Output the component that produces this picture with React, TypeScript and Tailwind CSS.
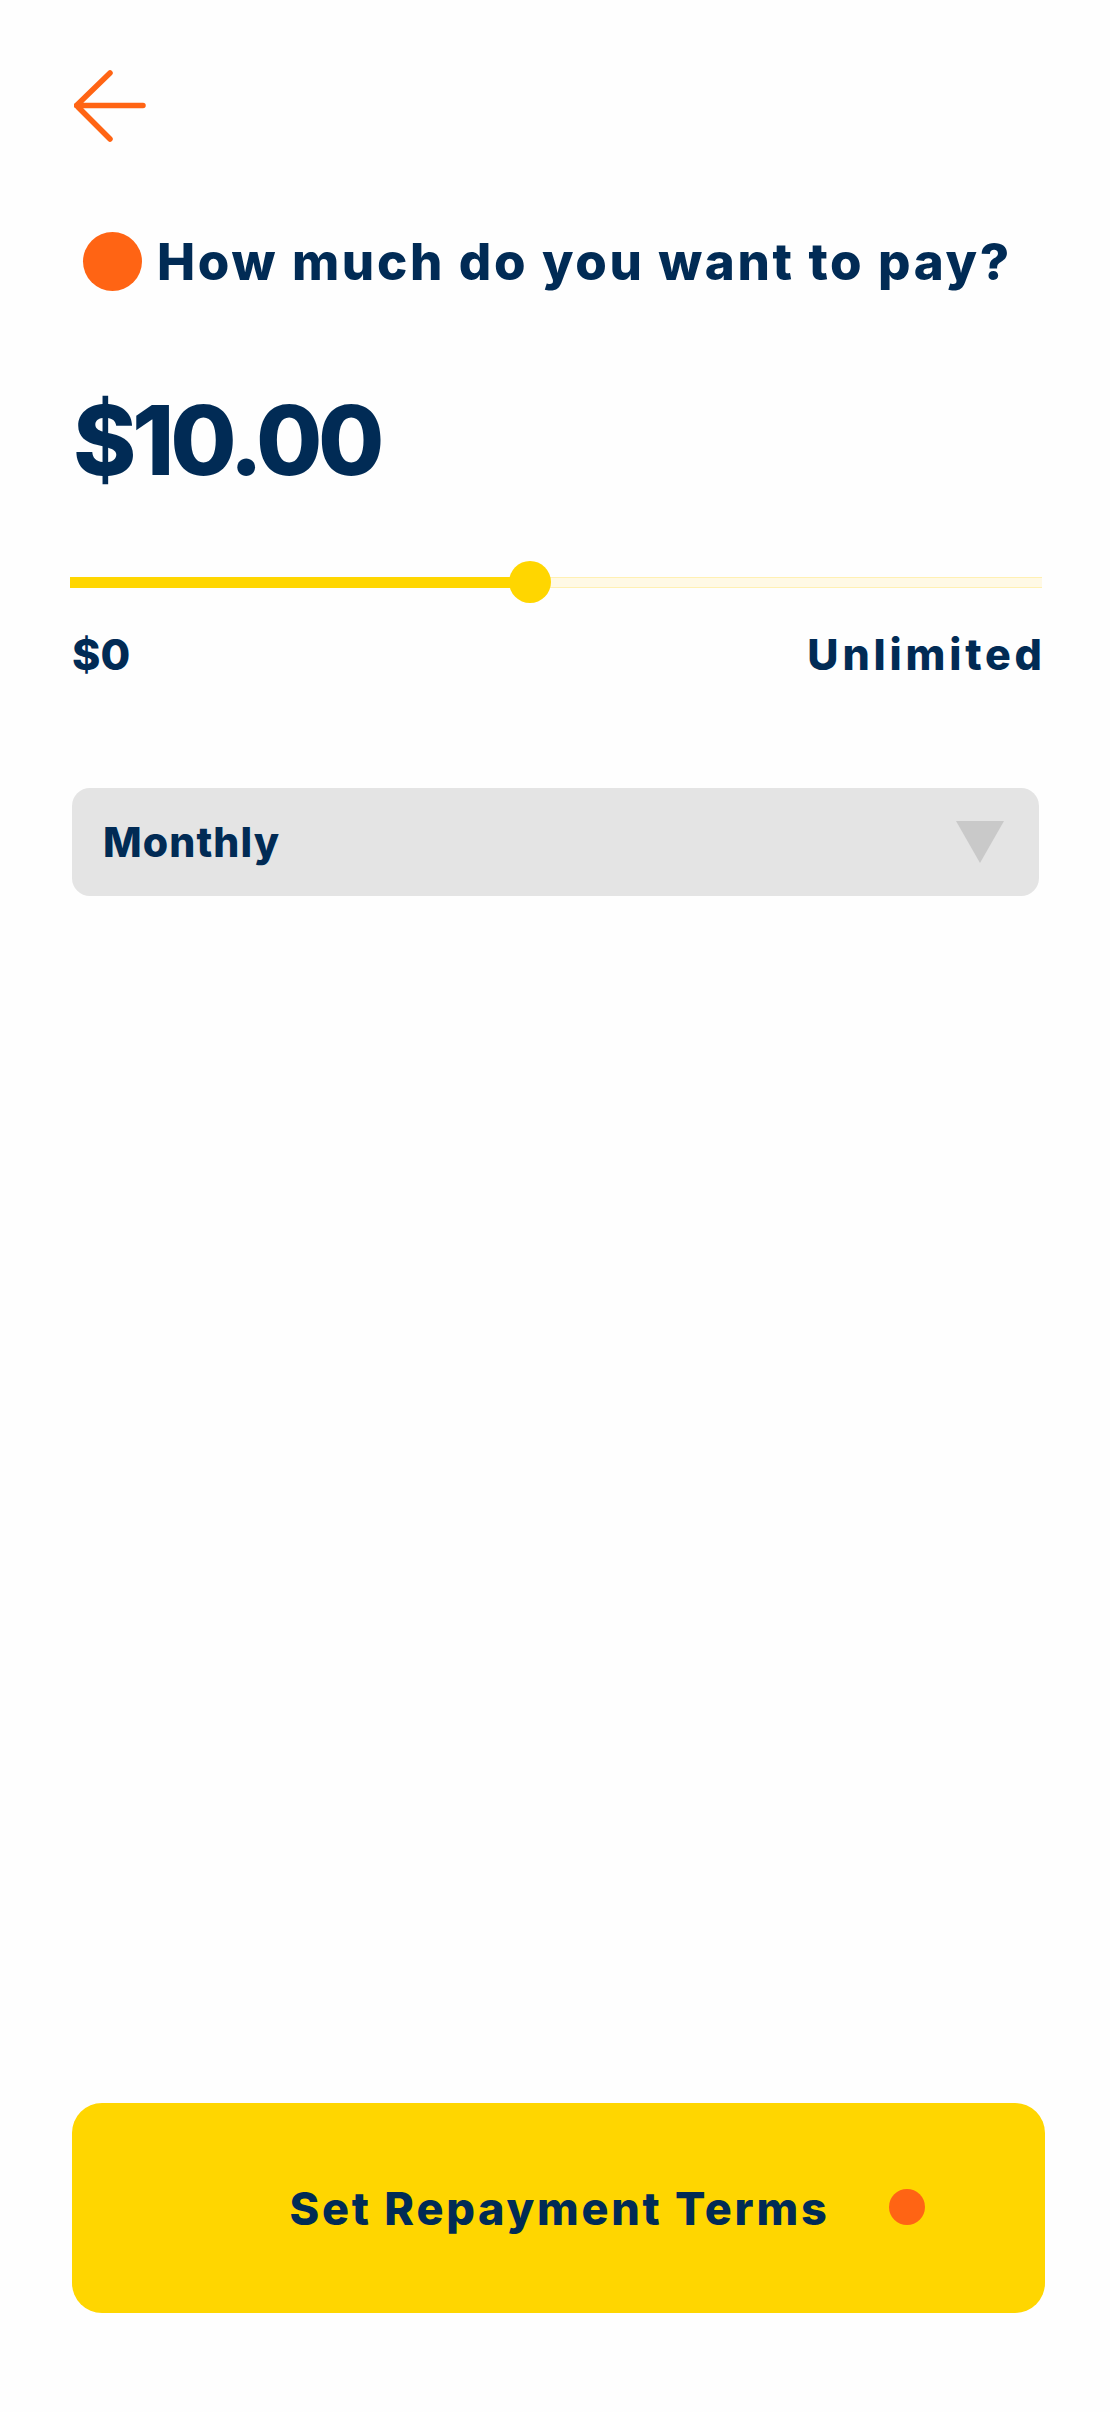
import React from "react";

const font = { fontFamily: "Inter, 'Noto Sans', sans-serif" };

export default function App() {
  const pct = 47.3;
  return (
    <div
      className="flex min-h-[2412px] w-full flex-col bg-[#fefefe] pb-[99px] text-[#012b55]"
      style={font}
    >
      <div className="ml-[74px] mt-[70px] h-[72px] w-[72px]">
        <svg width="72" height="72" viewBox="0 0 72 72" fill="none">
          <path
            d="M36 3 L2.5 35.5 L36 69 M2.5 35.5 H69"
            stroke="#ff6414"
            strokeWidth="5.5"
            strokeLinecap="round"
            strokeLinejoin="round"
          />
        </svg>
      </div>

      <div className="ml-[83px] mt-[90px] flex h-[59px] items-center gap-[15px]">
        <div className="h-[59px] w-[59px] shrink-0 rounded-full bg-[#ff6414]" />
        <h1 className="whitespace-nowrap text-[51px] font-extrabold leading-none tracking-[2.65px]">
          How much do you want to pay?
        </h1>
      </div>

      <div className="ml-[73px] mt-[101px] text-[96px] font-extrabold leading-none tracking-[-4.3px]">
        $10.00
      </div>

      <div className="relative ml-[70px] mt-[73px] flex h-[42px] w-[972px] items-center">
        <div className="h-[11px] w-full border-y border-[#fff0b3] bg-[#fff9e5]" />
        <div
          className="absolute left-0 top-[15.5px] h-[11px] bg-[#ffd600]"
          style={{ width: `${pct}%` }}
        />
        <div
          className="absolute top-0 h-[42px] w-[42px] -translate-x-1/2 rounded-full bg-[#ffd600]"
          style={{ left: `${pct}%` }}
        />
      </div>

      <div className="ml-[72px] mt-[30px] flex w-[970px] items-start justify-between text-[43px] font-extrabold leading-none">
        <span className="tracking-[0px]">$0</span>
        <span className="-mr-[3.8px] tracking-[3.8px]">Unlimited</span>
      </div>

      <div className="ml-[72px] mt-[112px] flex h-[108px] w-[967px] items-center justify-between rounded-[18px] bg-[#e4e4e4] pl-[31px] pr-[35px]">
        <span className="text-[41px] font-extrabold leading-none tracking-[1.1px]">Monthly</span>
        <svg width="48" height="42" viewBox="0 0 48 42">
          <polygon points="0,0 48,0 24,42" fill="#c9c9c9" />
        </svg>
      </div>

      <div className="relative ml-[72px] mt-auto flex h-[210px] w-[973px] items-center justify-center rounded-[30px] bg-[#ffd600]">
        <span className="pl-[2px] text-[45px] font-extrabold leading-none tracking-[2.75px]">
          Set Repayment Terms
        </span>
        <div className="absolute right-[120px] top-[86px] h-[36px] w-[36px] rounded-full bg-[#ff6414]" />
      </div>
    </div>
  );
}
